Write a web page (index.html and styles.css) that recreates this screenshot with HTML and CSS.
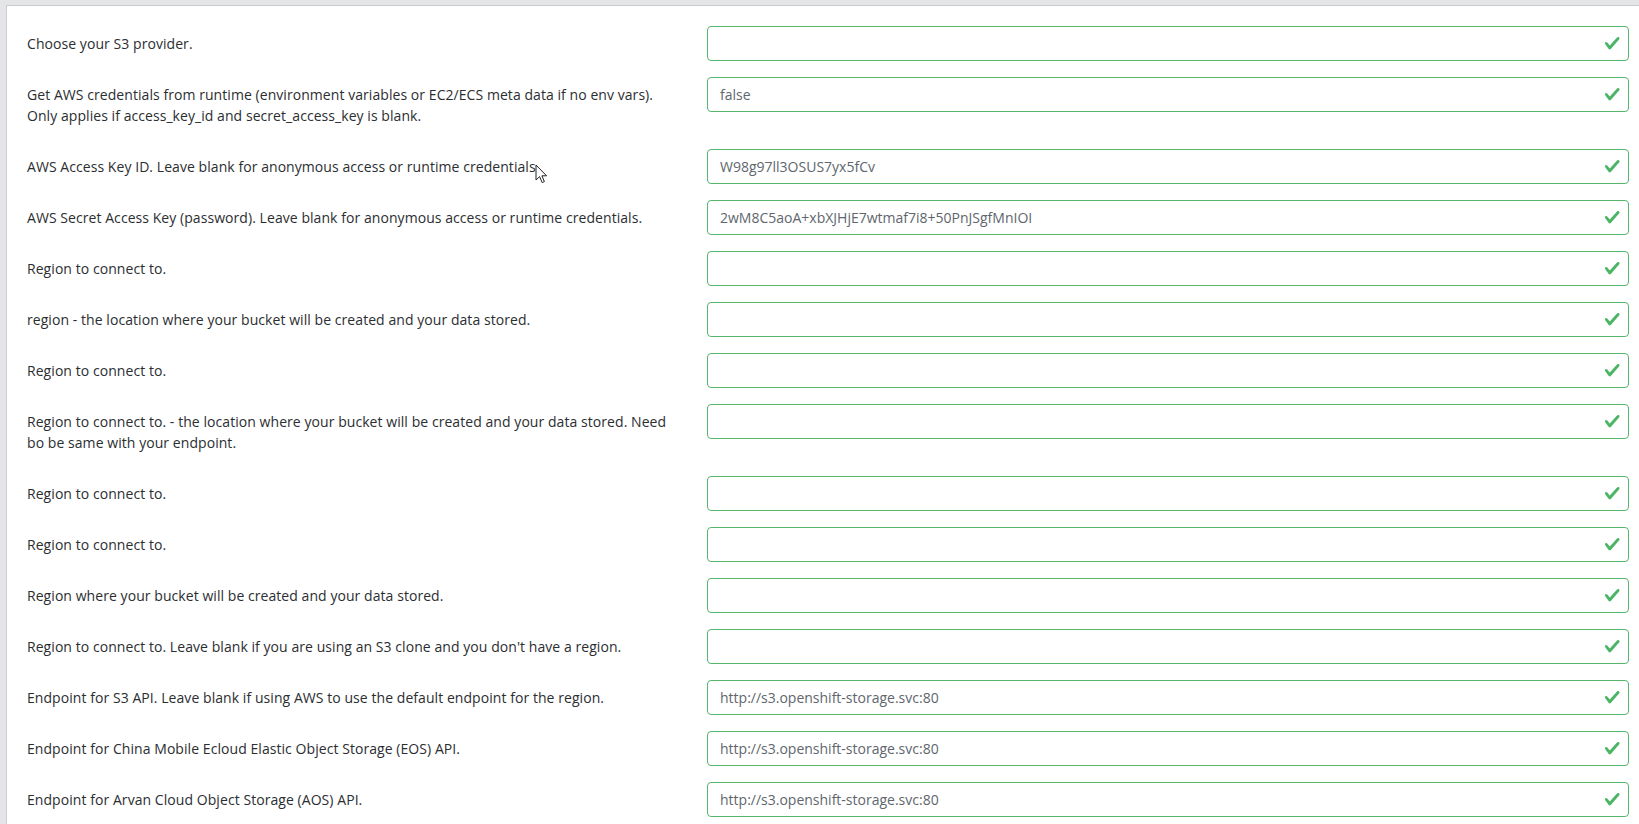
FILE: index.html
```html
<!DOCTYPE html>
<html>
<head>
<meta charset="utf-8">
<link rel="stylesheet" href="styles.css">
</head>
<body>
<div class="card">
  <div class="form">
    <div class="row"><div class="label">Choose your S3 provider.</div><div class="field"><span class="val"></span><svg class="check" viewBox="0 0 8 8"><path d="M2.3 6.73L.6 4.53c-.4-1.04.46-1.4 1.1-.8l1.1 1.4 3.4-3.8c.6-.63 1.6-.27 1.2.7l-4 4.6c-.43.5-.8.4-1.1.1z"/></svg></div></div>
    <div class="row"><div class="label">Get AWS credentials from runtime (environment variables or EC2/ECS meta data if no env vars). Only applies if access_key_id and secret_access_key is blank.</div><div class="field"><span class="val">false</span><svg class="check" viewBox="0 0 8 8"><path d="M2.3 6.73L.6 4.53c-.4-1.04.46-1.4 1.1-.8l1.1 1.4 3.4-3.8c.6-.63 1.6-.27 1.2.7l-4 4.6c-.43.5-.8.4-1.1.1z"/></svg></div></div>
    <div class="row"><div class="label">AWS Access Key ID. Leave blank for anonymous access or runtime credentials.</div><div class="field"><span class="val">W98g97ll3OSUS7yx5fCv</span><svg class="check" viewBox="0 0 8 8"><path d="M2.3 6.73L.6 4.53c-.4-1.04.46-1.4 1.1-.8l1.1 1.4 3.4-3.8c.6-.63 1.6-.27 1.2.7l-4 4.6c-.43.5-.8.4-1.1.1z"/></svg></div></div>
    <div class="row"><div class="label">AWS Secret Access Key (password). Leave blank for anonymous access or runtime credentials.</div><div class="field"><span class="val">2wM8C5aoA+xbXJHjE7wtmaf7i8+50PnJSgfMnIOI</span><svg class="check" viewBox="0 0 8 8"><path d="M2.3 6.73L.6 4.53c-.4-1.04.46-1.4 1.1-.8l1.1 1.4 3.4-3.8c.6-.63 1.6-.27 1.2.7l-4 4.6c-.43.5-.8.4-1.1.1z"/></svg></div></div>
    <div class="row"><div class="label">Region to connect to.</div><div class="field"><span class="val"></span><svg class="check" viewBox="0 0 8 8"><path d="M2.3 6.73L.6 4.53c-.4-1.04.46-1.4 1.1-.8l1.1 1.4 3.4-3.8c.6-.63 1.6-.27 1.2.7l-4 4.6c-.43.5-.8.4-1.1.1z"/></svg></div></div>
    <div class="row"><div class="label">region - the location where your bucket will be created and your data stored.</div><div class="field"><span class="val"></span><svg class="check" viewBox="0 0 8 8"><path d="M2.3 6.73L.6 4.53c-.4-1.04.46-1.4 1.1-.8l1.1 1.4 3.4-3.8c.6-.63 1.6-.27 1.2.7l-4 4.6c-.43.5-.8.4-1.1.1z"/></svg></div></div>
    <div class="row"><div class="label">Region to connect to.</div><div class="field"><span class="val"></span><svg class="check" viewBox="0 0 8 8"><path d="M2.3 6.73L.6 4.53c-.4-1.04.46-1.4 1.1-.8l1.1 1.4 3.4-3.8c.6-.63 1.6-.27 1.2.7l-4 4.6c-.43.5-.8.4-1.1.1z"/></svg></div></div>
    <div class="row"><div class="label">Region to connect to. - the location where your bucket will be created and your data stored. Need bo be same with your endpoint.</div><div class="field"><span class="val"></span><svg class="check" viewBox="0 0 8 8"><path d="M2.3 6.73L.6 4.53c-.4-1.04.46-1.4 1.1-.8l1.1 1.4 3.4-3.8c.6-.63 1.6-.27 1.2.7l-4 4.6c-.43.5-.8.4-1.1.1z"/></svg></div></div>
    <div class="row"><div class="label">Region to connect to.</div><div class="field"><span class="val"></span><svg class="check" viewBox="0 0 8 8"><path d="M2.3 6.73L.6 4.53c-.4-1.04.46-1.4 1.1-.8l1.1 1.4 3.4-3.8c.6-.63 1.6-.27 1.2.7l-4 4.6c-.43.5-.8.4-1.1.1z"/></svg></div></div>
    <div class="row"><div class="label">Region to connect to.</div><div class="field"><span class="val"></span><svg class="check" viewBox="0 0 8 8"><path d="M2.3 6.73L.6 4.53c-.4-1.04.46-1.4 1.1-.8l1.1 1.4 3.4-3.8c.6-.63 1.6-.27 1.2.7l-4 4.6c-.43.5-.8.4-1.1.1z"/></svg></div></div>
    <div class="row"><div class="label">Region where your bucket will be created and your data stored.</div><div class="field"><span class="val"></span><svg class="check" viewBox="0 0 8 8"><path d="M2.3 6.73L.6 4.53c-.4-1.04.46-1.4 1.1-.8l1.1 1.4 3.4-3.8c.6-.63 1.6-.27 1.2.7l-4 4.6c-.43.5-.8.4-1.1.1z"/></svg></div></div>
    <div class="row"><div class="label">Region to connect to. Leave blank if you are using an S3 clone and you don't have a region.</div><div class="field"><span class="val"></span><svg class="check" viewBox="0 0 8 8"><path d="M2.3 6.73L.6 4.53c-.4-1.04.46-1.4 1.1-.8l1.1 1.4 3.4-3.8c.6-.63 1.6-.27 1.2.7l-4 4.6c-.43.5-.8.4-1.1.1z"/></svg></div></div>
    <div class="row"><div class="label">Endpoint for S3 API. Leave blank if using AWS to use the default endpoint for the region.</div><div class="field"><span class="val">http://s3.openshift-storage.svc:80</span><svg class="check" viewBox="0 0 8 8"><path d="M2.3 6.73L.6 4.53c-.4-1.04.46-1.4 1.1-.8l1.1 1.4 3.4-3.8c.6-.63 1.6-.27 1.2.7l-4 4.6c-.43.5-.8.4-1.1.1z"/></svg></div></div>
    <div class="row"><div class="label">Endpoint for China Mobile Ecloud Elastic Object Storage (EOS) API.</div><div class="field"><span class="val">http://s3.openshift-storage.svc:80</span><svg class="check" viewBox="0 0 8 8"><path d="M2.3 6.73L.6 4.53c-.4-1.04.46-1.4 1.1-.8l1.1 1.4 3.4-3.8c.6-.63 1.6-.27 1.2.7l-4 4.6c-.43.5-.8.4-1.1.1z"/></svg></div></div>
    <div class="row"><div class="label">Endpoint for Arvan Cloud Object Storage (AOS) API.</div><div class="field"><span class="val">http://s3.openshift-storage.svc:80</span><svg class="check" viewBox="0 0 8 8"><path d="M2.3 6.73L.6 4.53c-.4-1.04.46-1.4 1.1-.8l1.1 1.4 3.4-3.8c.6-.63 1.6-.27 1.2.7l-4 4.6c-.43.5-.8.4-1.1.1z"/></svg></div></div>
  </div>
  <svg class="cursor" width="13" height="20" viewBox="0 0 13 20"><path d="M1 1 L1 16 L4.6 12.6 L7.2 18.6 L9.4 17.6 L6.9 11.8 L11.6 11.8 Z" fill="#fff" stroke="#222" stroke-width="1" stroke-linejoin="round"/></svg>
</div>
</body>
</html>
```

FILE: styles.css
```css
html, body {
  margin: 0;
  padding: 0;
}
body {
  background: #e4e5e7;
  padding: 5px 0 0 6px;
  overflow: hidden;
  height: 824px;
  box-sizing: border-box;
  font-family: "Open Sans", "Noto Sans", sans-serif;
  font-size: 14px;
}
.card {
  position: relative;
  width: 1642px;
  background: #fff;
  border-top: 1px solid #cbcccf;
  border-left: 1px solid #cbcccf;
  padding: 20px 20px 0 20px;
  min-height: 900px;
}
.form {
  display: flex;
  flex-direction: column;
  width: 1602px;
}
.row {
  display: grid;
  grid-template-columns: 650px 922px;
  column-gap: 30px;
  align-items: start;
  margin-bottom: 16px;
}
.label {
  padding: 7px 0;
  line-height: 21px;
  color: #2b2e31;
  letter-spacing: 0.06px;
}
.field {
  height: 35px;
  box-sizing: border-box;
  border: 1px solid #56b76c;
  border-radius: 4px;
  display: flex;
  align-items: center;
  padding: 0 8px 0 12px;
  color: #60666d;
  line-height: 21px;
}
.val {
  flex: 1;
  white-space: nowrap;
}
.check {
  width: 16.5px;
  height: 16.5px;
  fill: #4bb565;
  flex: none;
}
.cursor {
  position: absolute;
  left: 528px;
  top: 158px;
}
```
